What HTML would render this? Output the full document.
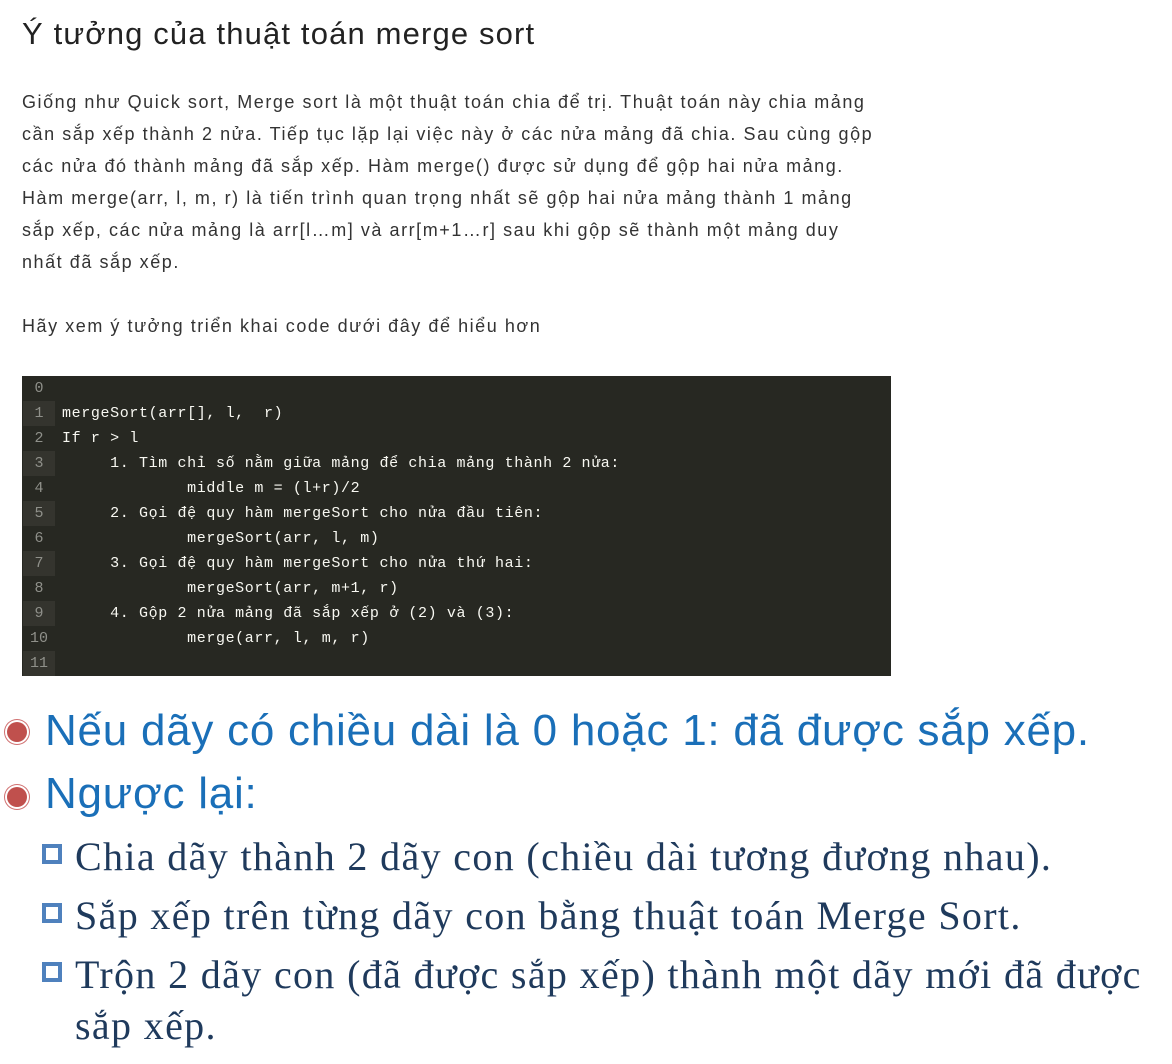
<!DOCTYPE html>
<html><head><meta charset="utf-8"><style>
body{margin:0;width:1172px;height:1064px;background:#fff;position:relative;overflow:hidden;font-family:"Liberation Sans",sans-serif}
.a{position:absolute;white-space:nowrap}
h1{position:absolute;left:22px;top:16px;margin:0;font-weight:normal;font-size:31px;color:#222;white-space:nowrap;letter-spacing:1.15px}
.p{left:22px;font-size:18px;color:#333;line-height:32px;letter-spacing:1.55px}
.code{position:absolute;left:22px;top:376px;width:869px;height:300px;background:#272822;font-family:"Liberation Mono","DejaVu Sans Mono",monospace;font-size:15px;color:#f8f8f2;letter-spacing:0.62px}
.row{height:25px;line-height:25px;position:relative;white-space:pre}
.n{position:absolute;left:1px;width:32px;height:25px;text-align:center;color:#8f908a;letter-spacing:0}
.row:nth-child(even) .n{background:#34342e}
.c{position:absolute;left:40px}
.b{font-size:44px;color:#1a6fb8;left:45px;letter-spacing:0.75px}
.dot{position:absolute;left:7px;width:20px;height:20px;border-radius:50%;background:#c0504d;box-shadow:0 0 0 2px #fff,0 0 0 3px #d07070}
.s{font-family:"Liberation Serif",serif;font-size:40px;color:#1f3a5c;left:75px;letter-spacing:1.35px}
.sq{position:absolute;left:42px;width:12px;height:12px;border:4px solid #4f81bd;background:#fff}
</style></head><body>
<h1>Ý tưởng của thuật toán merge sort</h1>
<div class="a p" style="top:86px">Giống như Quick sort, Merge sort là một thuật toán chia để trị. Thuật toán này chia mảng</div>
<div class="a p" style="top:118px">cần sắp xếp thành 2 nửa. Tiếp tục lặp lại việc này ở các nửa mảng đã chia. Sau cùng gộp</div>
<div class="a p" style="top:150px">các nửa đó thành mảng đã sắp xếp. Hàm merge() được sử dụng để gộp hai nửa mảng.</div>
<div class="a p" style="top:182px">Hàm merge(arr, l, m, r) là tiến trình quan trọng nhất sẽ gộp hai nửa mảng thành 1 mảng</div>
<div class="a p" style="top:214px">sắp xếp, các nửa mảng là arr[l…m] và arr[m+1…r] sau khi gộp sẽ thành một mảng duy</div>
<div class="a p" style="top:246px">nhất đã sắp xếp.</div>
<div class="a p" style="top:310px">Hãy xem ý tưởng triển khai code dưới đây để hiểu hơn</div>
<div class="code">
<div class="row"><span class="n">0</span><span class="c"></span></div>
<div class="row"><span class="n">1</span><span class="c">mergeSort(arr[], l,  r)</span></div>
<div class="row"><span class="n">2</span><span class="c">If r &gt; l</span></div>
<div class="row"><span class="n">3</span><span class="c">     1. Tìm chỉ số nằm giữa mảng để chia mảng thành 2 nửa:</span></div>
<div class="row"><span class="n">4</span><span class="c">             middle m = (l+r)/2</span></div>
<div class="row"><span class="n">5</span><span class="c">     2. Gọi đệ quy hàm mergeSort cho nửa đầu tiên:</span></div>
<div class="row"><span class="n">6</span><span class="c">             mergeSort(arr, l, m)</span></div>
<div class="row"><span class="n">7</span><span class="c">     3. Gọi đệ quy hàm mergeSort cho nửa thứ hai:</span></div>
<div class="row"><span class="n">8</span><span class="c">             mergeSort(arr, m+1, r)</span></div>
<div class="row"><span class="n">9</span><span class="c">     4. Gộp 2 nửa mảng đã sắp xếp ở (2) và (3):</span></div>
<div class="row"><span class="n">10</span><span class="c">             merge(arr, l, m, r)</span></div>
<div class="row"><span class="n">11</span><span class="c"></span></div>
</div>
<div class="dot" style="top:722px"></div>
<div class="a b" style="top:706px">Nếu dãy có chiều dài là 0 hoặc 1: đã được sắp xếp.</div>
<div class="dot" style="top:787px"></div>
<div class="a b" style="top:769px">Ngược lại:</div>
<div class="sq" style="top:844px"></div>
<div class="a s" style="top:833px">Chia dãy thành 2 dãy con (chiều dài tương đương nhau).</div>
<div class="sq" style="top:903px"></div>
<div class="a s" style="top:892px">Sắp xếp trên từng dãy con bằng thuật toán Merge Sort.</div>
<div class="sq" style="top:962px"></div>
<div class="a s" style="top:951px">Trộn 2 dãy con (đã được sắp xếp) thành một dãy mới đã được</div>
<div class="a s" style="top:1002px">sắp xếp.</div>
</body></html>
